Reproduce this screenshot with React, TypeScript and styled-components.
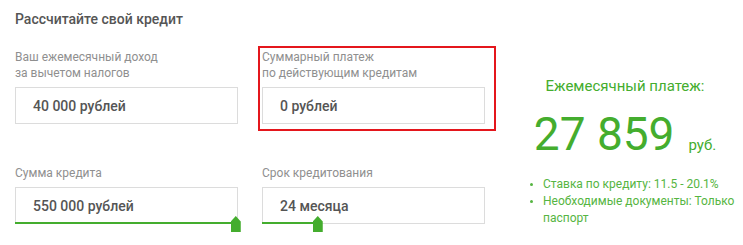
import React from 'react';
import styled, { createGlobalStyle } from 'styled-components';

const GlobalStyle = createGlobalStyle`
  html, body {
    margin: 0;
    padding: 0;
    background: #fff;
  }
  body {
    font-family: Roboto, 'Liberation Sans', Arial, sans-serif;
  }
  * {
    box-sizing: border-box;
  }
`;

const GREEN = '#44ad2e';

const Page = styled.div`
  display: flex;
  align-items: flex-start;
  width: 743px;
  height: 245px;
  overflow: hidden;
`;

const Calculator = styled.div`
  padding: 9px 0 0 15px;
  width: 490px;
`;

const Title = styled.div`
  font-size: 14px;
  line-height: 20px;
  font-weight: 500;
  color: #555;
  margin-bottom: 20px;
`;

const Grid = styled.div`
  display: grid;
  grid-template-columns: 223px 223px;
  column-gap: 24px;
  row-gap: 41px;
`;

const Field = styled.div<{ highlighted?: boolean }>`
  position: relative;
  display: flex;
  flex-direction: column;
  justify-content: flex-end;
  ${({ highlighted }) =>
    highlighted &&
    `
    &::after {
      content: '';
      position: absolute;
      left: -4px;
      right: -11px;
      top: -3px;
      bottom: -7px;
      border: 2px solid #e4161c;
      pointer-events: none;
    }
  `}
`;

const Label = styled.div`
  font-size: 12px;
  line-height: 16px;
  color: #8f8f8f;
  margin-bottom: 6px;
`;

const InputBox = styled.div`
  position: relative;
  height: 37px;
  border: 1px solid #dcdcdc;
  padding: 0 17px;
  display: flex;
  align-items: center;
  font-size: 14px;
  font-weight: 500;
  color: #555;
`;

const Track = styled.div`
  position: absolute;
  left: -1px;
  right: -1px;
  bottom: -1px;
  height: 2px;
`;

const Fill = styled.div`
  height: 100%;
  background: ${GREEN};
  position: relative;
`;

const Thumb = styled.div`
  position: absolute;
  right: -5px;
  top: -6px;
  width: 10px;
  height: 16px;
  background: ${GREEN};
  clip-path: polygon(50% 0, 100% 35%, 100% 100%, 0 100%, 0 35%);
`;

const Summary = styled.div`
  width: 236px;
  margin-left: 17px;
  padding-top: 76px;
  color: ${GREEN};
`;

const SummaryTitle = styled.div`
  text-align: center;
  font-size: 15px;
  line-height: 20px;
`;

const Amount = styled.div`
  display: flex;
  justify-content: center;
  align-items: baseline;
  margin-top: 16px;
`;

const Number = styled.span`
  font-size: 46px;
  line-height: 44px;
`;

const Currency = styled.span`
  font-size: 15px;
  margin-left: 14px;
`;

const Facts = styled.ul`
  margin: 20px 0 0;
  padding: 0 0 0 36px;
  font-size: 12px;
  line-height: 17px;
  color: #56b542;
  li::marker {
    font-size: 10px;
  }
`;

type SliderFieldProps = {
  label: string;
  value: string;
  percent: number;
};

const SliderField: React.FC<SliderFieldProps> = ({ label, value, percent }) => (
  <Field>
    <Label>{label}</Label>
    <InputBox>
      {value}
      <Track>
        <Fill style={{ width: `${percent}%` }}>
          <Thumb />
        </Fill>
      </Track>
    </InputBox>
  </Field>
);

export default function App() {
  return (
    <>
      <GlobalStyle />
      <Page>
        <Calculator>
          <Title>Рассчитайте свой кредит</Title>
          <Grid>
            <Field>
              <Label>
                Ваш ежемесячный доход
                <br />
                за вычетом налогов
              </Label>
              <InputBox>40 000 рублей</InputBox>
            </Field>
            <Field highlighted>
              <Label>
                Суммарный платеж
                <br />
                по действующим кредитам
              </Label>
              <InputBox>0 рублей</InputBox>
            </Field>
            <SliderField label="Сумма кредита" value="550 000 рублей" percent={99} />
            <SliderField label="Срок кредитования" value="24 месяца" percent={25} />
          </Grid>
        </Calculator>
        <Summary>
          <SummaryTitle>Ежемесячный платеж:</SummaryTitle>
          <Amount>
            <Number>27 859</Number>
            <Currency>руб.</Currency>
          </Amount>
          <Facts>
            <li>Ставка по кредиту: 11.5 - 20.1%</li>
            <li>Необходимые документы: Только паспорт</li>
          </Facts>
        </Summary>
      </Page>
    </>
  );
}
